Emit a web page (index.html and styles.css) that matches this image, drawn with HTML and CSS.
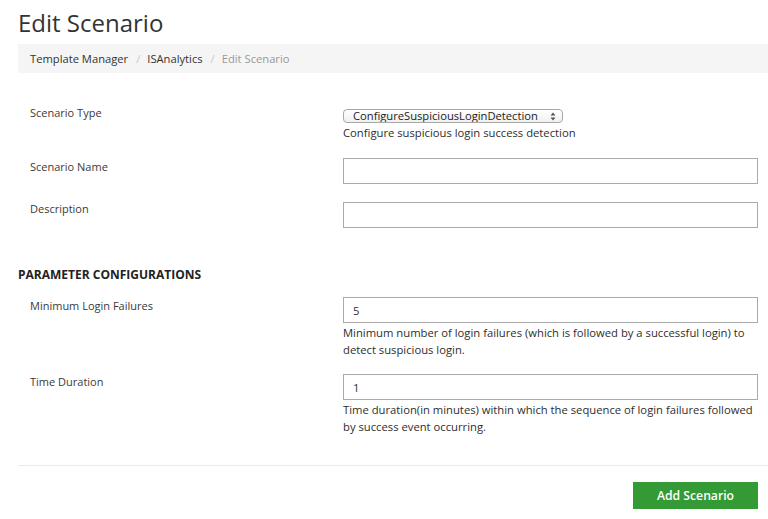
FILE: index.html
```html
<!DOCTYPE html>
<html>
<head>
<meta charset="utf-8">
<link rel="stylesheet" href="styles.css">
</head>
<body>
<div class="page">
  <h1 class="title">Edit Scenario</h1>
  <ol class="breadcrumb">
    <li><a href="#">Template Manager</a></li>
    <li><a href="#">ISAnalytics</a></li>
    <li class="active">Edit Scenario</li>
  </ol>

  <form class="form">
    <div class="row row-type">
      <label class="label">Scenario Type</label>
      <div class="control">
        <span class="select-wrap">
          <select class="select"><option>ConfigureSuspiciousLoginDetection</option></select>
          <svg class="select-arrows" width="6" height="9" viewBox="0 0 6 9"><path d="M3 0.5 L5.5 3.5 H0.5 Z M3 8.5 L5.5 5.5 H0.5 Z" fill="#555"/></svg>
        </span>
        <div class="help">Configure suspicious login success detection</div>
      </div>
    </div>
    <div class="row row-name">
      <label class="label">Scenario Name</label>
      <div class="control"><input class="input" type="text"></div>
    </div>
    <div class="row row-desc">
      <label class="label">Description</label>
      <div class="control"><input class="input" type="text"></div>
    </div>

    <h4 class="section">PARAMETER CONFIGURATIONS</h4>

    <div class="row row-p1">
      <label class="label">Minimum Login Failures</label>
      <div class="control">
        <input class="input" type="text" value="5">
        <div class="help">Minimum number of login failures (which is followed by a successful login) to detect suspicious login.</div>
      </div>
    </div>
    <div class="row row-p2">
      <label class="label">Time Duration</label>
      <div class="control">
        <input class="input" type="text" value="1">
        <div class="help">Time duration(in minutes) within which the sequence of login failures followed by success event occurring.</div>
      </div>
    </div>

    <hr class="divider">
    <div class="actions">
      <button type="button" class="btn">Add Scenario</button>
    </div>
  </form>
</div>
</body>
</html>
```

FILE: styles.css
```css
* { box-sizing: border-box; }
html, body { margin: 0; padding: 0; background: #fff; }
body {
  font-family: "Open Sans", "Liberation Sans", sans-serif;
  color: #333;
  font-size: 11px;
}
.page { padding-left: 18px; }
.title {
  margin: 5px 0 3px;
  font-size: 24px;
  line-height: 36px;
  font-weight: 400;
  color: #333;
}
.breadcrumb {
  list-style: none;
  margin: 0;
  padding: 6px 12px 5px;
  background: #f5f5f5;
  font-size: 11.2px;
  line-height: 18px;
  display: flex;
}
.breadcrumb li { color: #999; }
.breadcrumb li + li::before {
  content: "/";
  color: #ccc;
  padding: 0 7px 0 8px;
}
.breadcrumb a { color: #333; text-decoration: none; }

.form { margin: 32px 0 0; padding-right: 10px; }
.row {
  display: grid;
  grid-template-columns: 313px 1fr;
  padding-left: 12px;
}
.label { font-size: 11px; line-height: 17px; color: #3a3a3a; }
.row-type .label { margin-top: -1px; }
.row-desc .label { margin-top: -2px; }
.row-p2 .label { margin-top: -1px; }
.row-name { margin-top: 17px; }
.row-desc { margin-top: 18px; }
.row-p1 { margin-top: 13px; }
.row-p2 { margin-top: 16px; }

.select-wrap {
  position: relative;
  display: inline-block;
  margin-top: 4px;
  height: 14px;
  vertical-align: top;
}
.select {
  -webkit-appearance: none;
  appearance: none;
  display: block;
  width: 220px;
  height: 14px;
  padding: 0 0 0 9px;
  margin: 0;
  border: 1px solid #a8a8a8;
  border-radius: 4px;
  background: linear-gradient(#ffffff, #f0f0f0);
  font-family: "Open Sans", "Liberation Sans", sans-serif;
  font-size: 11.2px;
  line-height: 12px;
  color: #222;
}
.select-arrows {
  position: absolute;
  right: 7px;
  top: 2.5px;
}
.help {
  margin-top: 1px;
  font-size: 11.25px;
  line-height: 17px;
  color: #2e2e2e;
}
.input {
  display: block;
  width: 100%;
  height: 26px;
  margin: 0;
  border: 1px solid #aaa;
  padding: 0 9px;
  font-family: "Open Sans", "Liberation Sans", sans-serif;
  font-size: 11.25px;
  color: #333;
  background: #fff;
  outline: none;
}
.section {
  margin: 38px 0 0;
  font-size: 12px;
  line-height: 18px;
  font-weight: 700;
  color: #222;
}
.divider {
  margin: 30px -10px 0 0;
  border: 0;
  border-top: 1px solid #eaeaea;
  height: 0;
}
.actions {
  display: flex;
  justify-content: flex-end;
  margin-top: 16px;
}
.btn {
  width: 125px;
  height: 27px;
  border: 0;
  background: #339a35;
  color: #fff;
  font-family: "Open Sans", "Liberation Sans", sans-serif;
  font-size: 12.2px;
  font-weight: 600;
  padding: 0;
}
```
